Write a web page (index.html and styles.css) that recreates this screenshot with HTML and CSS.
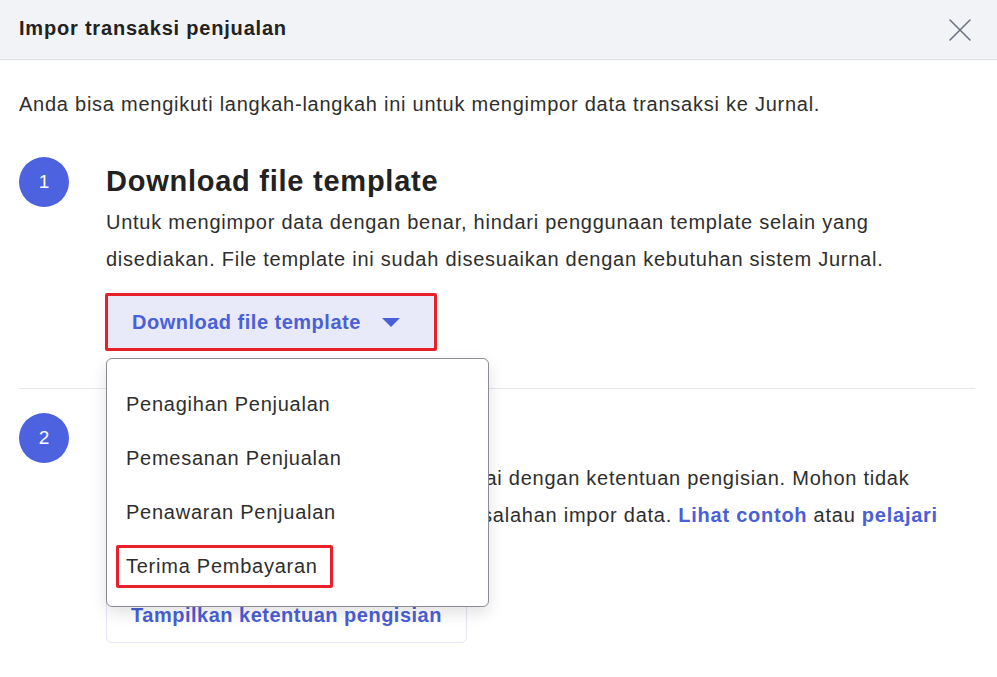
FILE: index.html
```html
<!DOCTYPE html>
<html lang="id">
<head>
  <meta charset="UTF-8" />
  <meta name="viewport" content="width=device-width, initial-scale=1.0" />
  <title>Impor transaksi penjualan</title>
  <link rel="stylesheet" href="styles.css">
</head>
<body>
  <div class="modal">
    <div class="modal-header">
      <h2>Impor transaksi penjualan</h2>
      <button class="close-btn" aria-label="Tutup">
        <svg width="22" height="22" viewBox="0 0 22 22">
          <path d="M1 1 L21 21 M21 1 L1 21" stroke="#6b7280" stroke-width="1.6" fill="none" stroke-linecap="round"/>
        </svg>
      </button>
    </div>

    <div class="modal-body">
      <p class="intro">Anda bisa mengikuti langkah-langkah ini untuk mengimpor data transaksi ke Jurnal.</p>

      <div class="step step-first">
        <div class="step-num">1</div>
        <div class="step-content">
          <h3>Download file template</h3>
          <p>Untuk mengimpor data dengan benar, hindari penggunaan template selain yang disediakan. File template ini sudah disesuaikan dengan kebutuhan sistem Jurnal.</p>
          <div class="dl-wrap">
            <button class="dl-btn">Download file template <span class="caret"></span></button>
            <ul class="dropdown">
              <li>Penagihan Penjualan</li>
              <li>Pemesanan Penjualan</li>
              <li>Penawaran Penjualan</li>
              <li><span class="marked">Terima Pembayaran</span></li>
            </ul>
          </div>
        </div>
      </div>

      <hr class="divider">

      <div class="step">
        <div class="step-num">2</div>
        <div class="step-content">
          <h3>Isi file template</h3>
          <p>Masukkan data ke dalam template sesuai dengan ketentuan pengisian. Mohon tidak mengubah struktur agar tidak terjadi kesalahan impor data. <a href="#">Lihat contoh</a> atau <a href="#">pelajari selengkapnya</a>.</p>
          <button class="rules-btn">Tampilkan ketentuan pengisian</button>
        </div>
      </div>
    </div>
  </div>
</body>
</html>
```

FILE: styles.css
```css
body {
  margin: 0;
  background-color: #fff;
  color: #2e2e2e;
  font-family: "Liberation Sans", Arial, sans-serif;
}
.modal-header {
  height: 59px;
  background-color: #f2f3f7;
  border-bottom: 1px solid #dcdfe6;
  display: flex;
  align-items: center;
  justify-content: space-between;
  padding: 0 26px 0 19px;
}
.modal-header h2 {
  margin: 0 0 3px;
  font-size: 20px;
  font-weight: bold;
  color: #222;
  letter-spacing: 0.8px;
}
.close-btn {
  background: none;
  border: none;
  padding: 0;
  display: flex;
}
.modal-body {
  padding: 0 22px 0 19px;
}
.intro {
  margin: 30px 0 0;
  font-size: 20px;
  line-height: 28px;
  letter-spacing: 0.75px;
}
.step {
  display: flex;
  gap: 37px;
}
.step-first {
  margin-top: 39px;
}
.step-num {
  flex: none;
  width: 50px;
  height: 50px;
  border-radius: 50%;
  background-color: #4d62de;
  color: #fff;
  font-size: 19px;
  display: flex;
  align-items: center;
  justify-content: center;
}
.step-content {
  flex: 1;
  max-width: 850px;
}
.step-content h3 {
  margin: 6px 0 0;
  font-size: 29px;
  line-height: 36px;
  font-weight: bold;
  color: #222;
  letter-spacing: 0.75px;
}
.step-content p {
  margin: 5px 0 0;
  font-size: 20px;
  line-height: 37px;
  letter-spacing: 0.75px;
}
.step-content a {
  color: #4a5fd8;
  font-weight: bold;
  text-decoration: none;
}
.dl-wrap {
  position: relative;
  margin-top: 15px;
}
.dl-btn {
  display: flex;
  align-items: center;
  gap: 21px;
  height: 58px;
  padding: 0 34px 0 24px;
  margin-left: -1px;
  border: 3px solid #e8202a;
  border-radius: 2px;
  background-color: #e8eafa;
  color: #4a5fd8;
  font-family: inherit;
  font-size: 20px;
  font-weight: bold;
  letter-spacing: 0.5px;
}
.caret {
  width: 0;
  height: 0;
  border-left: 9px solid transparent;
  border-right: 9px solid transparent;
  border-top: 9px solid #4a5fd8;
}
.dropdown {
  position: absolute;
  top: 65px;
  left: 0;
  z-index: 5;
  width: 381px;
  margin: 0;
  padding: 18px 0 13px;
  list-style: none;
  background-color: #fff;
  border: 1px solid #8a8d94;
  border-radius: 6px;
  box-shadow: 0 6px 16px rgba(0, 0, 0, 0.12);
}
.dropdown li {
  height: 54px;
  display: flex;
  align-items: center;
  padding-left: 19px;
  font-size: 20px;
  letter-spacing: 0.75px;
  color: #2e2e2e;
}
.marked {
  border: 3px solid #e8202a;
  border-radius: 2px;
  padding: 7px 12px 7px 7px;
  margin-left: -10px;
}
.divider {
  border: none;
  border-top: 1px solid #e5e7eb;
  margin: 37px 0 24px;
}
.rules-btn {
  margin-top: 16px;
  width: 361px;
  height: 56px;
  background-color: #fff;
  border: 1px solid #e3e6f7;
  border-radius: 6px;
  color: #4a5fd8;
  font-family: inherit;
  font-size: 20px;
  font-weight: bold;
  letter-spacing: 0.5px;
}
```
